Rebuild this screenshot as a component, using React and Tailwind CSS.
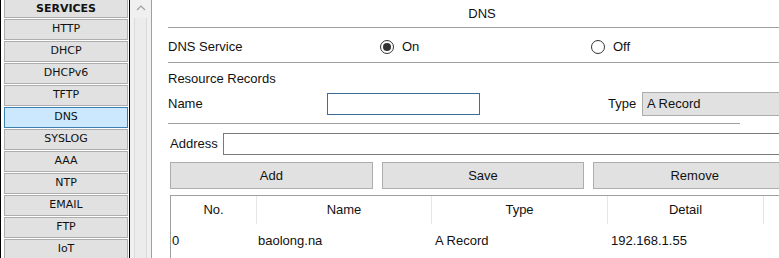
import React from 'react';

const services = ['SERVICES', 'HTTP', 'DHCP', 'DHCPv6', 'TFTP', 'DNS', 'SYSLOG', 'AAA', 'NTP', 'EMAIL', 'FTP', 'IoT'];

const Radio = ({ checked, label }) => (
  <div className="flex items-center gap-[8px]">
    <span className="w-[14px] h-[14px] rounded-full border border-[#333] bg-white flex items-center justify-center">
      {checked && <span className="w-[8px] h-[8px] rounded-full bg-[#333]" />}
    </span>
    <span>{label}</span>
  </div>
);

export default function App() {
  return (
    <div className="w-[779px] h-[258px] overflow-hidden bg-white flex text-[13px] text-[#111]" style={{ fontFamily: '"Liberation Sans", Arial, sans-serif' }}>
      {/* left service list */}
      <div className="w-[130px] shrink-0 h-full border-l border-r border-black bg-white overflow-hidden">
        <div className="mt-[-3px] ml-[3px] w-[124px] flex flex-col gap-[1px]" style={{ fontFamily: '"DejaVu Sans", Verdana, sans-serif' }}>
          {services.map((s) => (
            <div
              key={s}
              className={
                s === 'DNS'
                  ? 'h-[21px] shrink-0 flex items-center justify-center border border-[#3c7fb1] bg-[#cce8ff] text-[11px]'
                  : s === 'SERVICES'
                  ? 'h-[21px] shrink-0 flex items-center justify-center border border-[#adadad] bg-[#e1e1e1] text-[11px] font-bold pt-[3px]'
                  : 'h-[21px] shrink-0 flex items-center justify-center border border-[#adadad] bg-[#e1e1e1] text-[11px]'
              }
            >
              {s}
            </div>
          ))}
        </div>
      </div>

      {/* scrollbar */}
      <div className="w-[22px] shrink-0 h-full bg-[#f0f0f0] border-r border-[#a0a0a0] flex flex-col items-center">
        <svg width="10" height="8" viewBox="0 0 10 8" className="mt-[4px]">
          <path d="M1 6 L5 2 L9 6" fill="none" stroke="#a0a0a0" strokeWidth="1.2" />
        </svg>
        <div className="mt-[6px] w-[13px] flex-1 border-x border-[#dadada] bg-[#ececec]" />
      </div>

      {/* main panel */}
      <div className="flex-1 h-full overflow-hidden pl-[16px]">
        <div className="w-[628px]">
          <div className="h-[28px] flex items-center justify-center border-b border-[#a0a0a0]">DNS</div>

          <div className="h-[35px] flex items-center border-b border-[#a0a0a0] pt-[3px]">
            <span className="w-[212px]">DNS Service</span>
            <div className="w-[211px]">
              <Radio checked label="On" />
            </div>
            <Radio label="Off" />
          </div>

          <div className="h-[29px] flex items-center pt-[2px]">Resource Records</div>

          <div className="flex items-center h-[24px]">
            <span className="w-[159px]">Name</span>
            <div className="w-[153px] h-[22px] border border-[#3c6e97] bg-white" />
            <span className="ml-[128px] w-[34px]">Type</span>
            <div className="w-[153px] h-[24px] border border-[#adadad] bg-[#e1e1e1] flex items-center pl-[4px]">A Record</div>
          </div>

          <div className="mt-[7px] w-[572px] border-b border-[#a0a0a0]" />

          <div className="mt-[9px] flex items-center h-[22px] pl-[2px]">
            <span className="w-[53px]">Address</span>
            <div className="flex-1 h-[22px] border border-[#7a7a7a] bg-white" />
          </div>

          <div className="mt-[7px] pl-[2px] grid grid-cols-3 gap-[9px] h-[27px]">
            {['Add', 'Save', 'Remove'].map((b) => (
              <div key={b} className="flex items-center justify-center border border-[#adadad] bg-[#e1e1e1]">
                {b}
              </div>
            ))}
          </div>

          <div className="mt-[6px] ml-[2px] border-l border-t border-[#a0a0a0] h-[70px]">
            <div className="flex h-[28px] items-center">
              <div className="w-[86px] border-r border-[#e6e6e6] h-full flex items-center justify-center">No.</div>
              <div className="w-[175px] border-r border-[#e6e6e6] h-full flex items-center justify-center">Name</div>
              <div className="w-[176px] border-r border-[#e6e6e6] h-full flex items-center justify-center">Type</div>
              <div className="w-[156px] border-r border-[#e6e6e6] h-full flex items-center justify-center">Detail</div>
            </div>
            <div className="flex h-[33px] items-center">
              <div className="w-[86px] pl-[1px]">0</div>
              <div className="w-[175px] pl-[1px]">baolong.na</div>
              <div className="w-[176px] pl-[3px]">A Record</div>
              <div className="w-[156px] pl-[3px]">192.168.1.55</div>
            </div>
          </div>
        </div>
      </div>
    </div>
  );
}
